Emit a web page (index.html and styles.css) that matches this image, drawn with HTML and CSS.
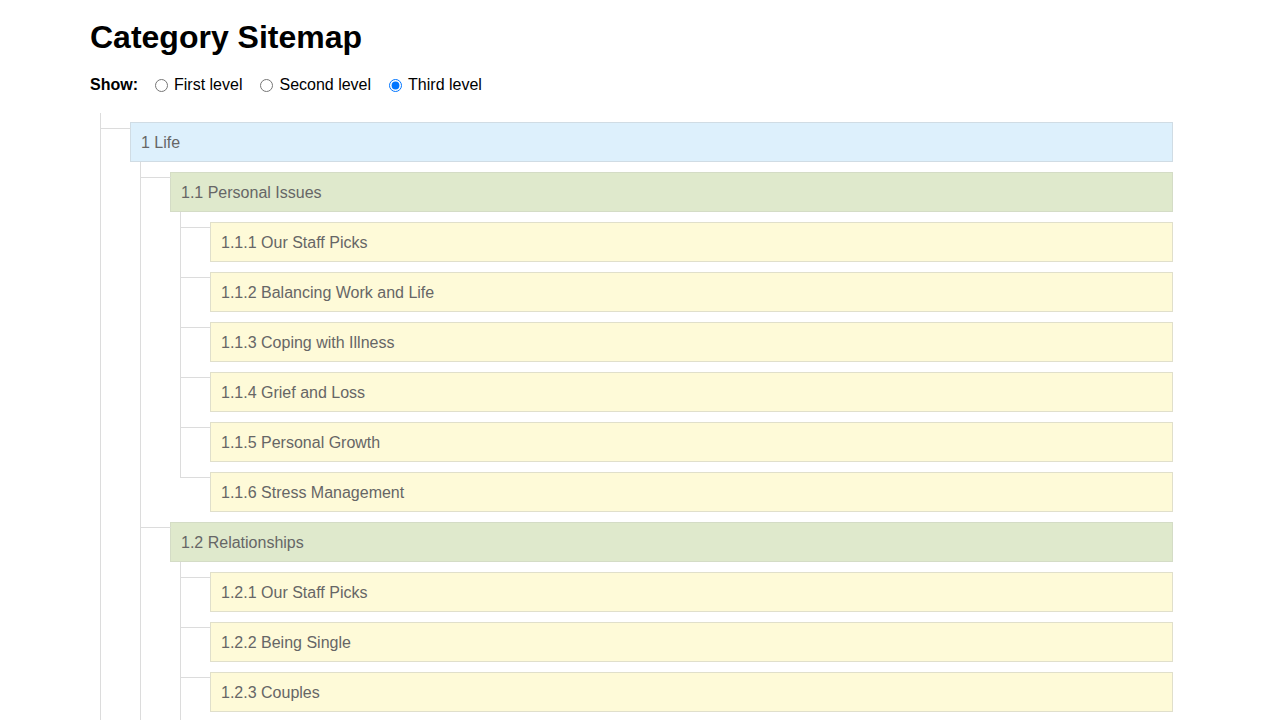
FILE: index.html
```html
<!DOCTYPE html>
<html lang="en">
<head>
    <meta charset="UTF-8">
    <meta name="viewport" content="width=device-width, initial-scale=1.0">
    <title>Category Sitemap</title>
    <link rel="stylesheet" href="styles.css">
</head>
<body>
    <div class="container">
        <h1>Category Sitemap</h1>
        <div class="level-picker">
            <span class="show-label">Show:</span>
            <label><input type="radio" name="level" value="1"> First level</label>
            <label><input type="radio" name="level" value="2"> Second level</label>
            <label><input type="radio" name="level" value="3" checked> Third level</label>
        </div>

        <ul class="tree">
            <li>
                <div class="node lvl1">1 Life</div>
                <ul>
                    <li>
                        <div class="node lvl2">1.1 Personal Issues</div>
                        <ul>
                            <li><div class="node lvl3">1.1.1 Our Staff Picks</div></li>
                            <li><div class="node lvl3">1.1.2 Balancing Work and Life</div></li>
                            <li><div class="node lvl3">1.1.3 Coping with Illness</div></li>
                            <li><div class="node lvl3">1.1.4 Grief and Loss</div></li>
                            <li><div class="node lvl3">1.1.5 Personal Growth</div></li>
                            <li><div class="node lvl3">1.1.6 Stress Management</div></li>
                        </ul>
                    </li>
                    <li>
                        <div class="node lvl2">1.2 Relationships</div>
                        <ul>
                            <li><div class="node lvl3">1.2.1 Our Staff Picks</div></li>
                            <li><div class="node lvl3">1.2.2 Being Single</div></li>
                            <li><div class="node lvl3">1.2.3 Couples</div></li>
                            <li><div class="node lvl3">1.2.4 Divorce and Separation</div></li>
                            <li><div class="node lvl3">1.2.5 Friendship</div></li>
                        </ul>
                    </li>
                    <li>
                        <div class="node lvl2">1.3 Family</div>
                        <ul>
                            <li><div class="node lvl3">1.3.1 Our Staff Picks</div></li>
                            <li><div class="node lvl3">1.3.2 Parenting</div></li>
                        </ul>
                    </li>
                </ul>
            </li>
            <li>
                <div class="node lvl1">2 Work</div>
                <ul>
                    <li>
                        <div class="node lvl2">2.1 Careers</div>
                        <ul>
                            <li><div class="node lvl3">2.1.1 Our Staff Picks</div></li>
                        </ul>
                    </li>
                </ul>
            </li>
        </ul>
    </div>
</body>
</html>
```

FILE: styles.css
```css
* {
    box-sizing: border-box;
}

body {
    margin: 0;
    font-family: "Liberation Sans", Arial, sans-serif;
    color: #000;
    background: #fff;
}

.container {
    width: 1083px;
    margin-left: 90px;
    padding-top: 17px;
}

h1 {
    margin: 0;
    font-size: 32px;
    font-weight: bold;
    line-height: 40px;
}

.level-picker {
    display: flex;
    align-items: center;
    margin-top: 18px;
    font-size: 16px;
    line-height: 20px;
}

.show-label {
    font-weight: bold;
    margin-right: 14px;
}

.level-picker label {
    display: flex;
    align-items: center;
    margin-right: 15px;
}

.level-picker input {
    margin: 0 6px 0 3px;
    width: 13px;
    height: 13px;
}

/* tree */
.tree,
.tree ul {
    list-style: none;
    margin: 0;
    padding: 0;
}

.tree {
    margin-top: 18px;
    margin-left: 10px;
}

.tree ul {
    margin-left: 10px;
}

.tree li {
    position: relative;
    padding: 9px 0 0 30px;
}

.tree li::before {
    content: "";
    position: absolute;
    left: 0;
    top: 0;
    width: 30px;
    height: 15px;
    border-left: 1px solid #dcdcdc;
    border-bottom: 1px solid #dcdcdc;
}

.tree li::after {
    content: "";
    position: absolute;
    left: 0;
    top: 15px;
    bottom: 0;
    border-left: 1px solid #dcdcdc;
}

.tree li:last-child::after {
    display: none;
}

.tree li li {
    padding-top: 10px;
}

.node {
    height: 40px;
    padding: 1px 10px 0;
    border: 1px solid;
    font-size: 16px;
    line-height: 37px;
    color: #666;
}

.lvl1 {
    background: #ddf0fc;
    border-color: #d0dce4;
}

.lvl2 {
    background: #dfe9cc;
    border-color: #d4dcc6;
}

.lvl3 {
    background: #fefad8;
    border-color: #e0dfcb;
}
```
